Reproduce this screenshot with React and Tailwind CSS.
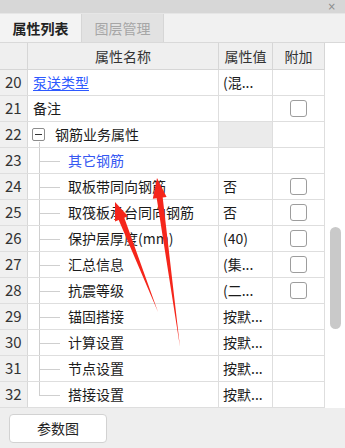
import React from 'react';

const rows = [
    { n: 20, name: '泵送类型', value: '(混...', blue: true, link: true },
    { n: 21, name: '备注', value: '', check: true },
    { n: 22, name: '钢筋业务属性', value: '', group: true },
    { n: 23, name: '其它钢筋', value: '', blue: true, tree: 'mid' },
    { n: 24, name: '取板带同向钢筋', value: '否', check: true, tree: 'mid' },
    { n: 25, name: '取筏板承台同向钢筋', value: '否', check: true, tree: 'mid' },
    { n: 26, name: '保护层厚度(mm)', value: '(40)', check: true, tree: 'mid' },
    { n: 27, name: '汇总信息', value: '(集...', check: true, tree: 'mid' },
    { n: 28, name: '抗震等级', value: '(二...', check: true, tree: 'mid' },
    { n: 29, name: '锚固搭接', value: '按默...', tree: 'mid' },
    { n: 30, name: '计算设置', value: '按默...', tree: 'mid' },
    { n: 31, name: '节点设置', value: '按默...', tree: 'mid' },
    { n: 32, name: '搭接设置', value: '按默...', tree: 'end' },
];

const font = { fontFamily: '"Noto Sans CJK SC", "Liberation Sans", sans-serif' };

const App = () => {
    return (
        <div className="relative w-[345px] h-[448px] bg-[#eeeeee] overflow-hidden text-[14px] text-[#1b1b1b]" style={font}>
            {/* title bar */}
            <div className="h-[14px] bg-[#d7d7d7] flex items-center justify-end pr-[9px] border-b border-[#e6e6e6]">
                <span className="text-[10px] leading-[10px] text-[#8a8a8a]" style={{ fontFamily: '"DejaVu Sans", sans-serif' }}>×</span>
            </div>

            {/* tabs */}
            <div className="h-[29px] flex bg-[#f1f1f1] border-b border-[#d9d9d9]">
                <div className="w-[82px] flex items-center justify-center bg-[#f3f3f3] border-r border-[#d6d6d6] font-bold text-[#222]">属性列表</div>
                <div className="w-[82px] flex items-center justify-center bg-[#e2e2e2] border-r border-[#d6d6d6] text-[#a6a6a6]">图层管理</div>
            </div>

            {/* table */}
            <div className="flex bg-white">
                <div className="w-[325px]">
                    <div className="grid grid-cols-[28px_191px_54px_52px] h-[27px] bg-[#efefef] border-b border-[#d6d6d6]">
                        <div className="border-r border-[#d6d6d6]"></div>
                        <div className="border-r border-[#d6d6d6] flex items-center justify-center text-[#333]">属性名称</div>
                        <div className="border-r border-[#d6d6d6] flex items-center justify-center text-[#333]">属性值</div>
                        <div className="border-r border-[#d6d6d6] flex items-center justify-center text-[#333]">附加</div>
                    </div>
                    {rows.map((r) => (
                        <div key={r.n} className="grid grid-cols-[28px_191px_54px_52px] h-[26px] border-b border-[#dedede]">
                            <div className="bg-[#f0f0f0] border-r border-[#d8d8d8] flex items-center pl-[5px] text-[#333] text-[15px]">{r.n}</div>
                            <div className="relative border-r border-[#dedede] flex items-center overflow-hidden whitespace-nowrap">
                                {r.group && (
                                    <>
                                        <span className="ml-[4px] w-[13px] h-[13px] border border-[#8c8c8c] rounded-[2px] flex items-center justify-center bg-white">
                                            <span className="w-[7px] h-[1px] bg-[#333]"></span>
                                        </span>
                                        <span className="absolute left-[11px] top-[20px] bottom-[-1px] w-px bg-[#cfcfcf]"></span>
                                        <span className="ml-[10px]">{r.name}</span>
                                    </>
                                )}
                                {r.tree && (
                                    <>
                                        <span className={`absolute left-[11px] top-[-1px] w-px bg-[#cfcfcf] ${r.tree === 'end' ? 'h-[14px]' : 'bottom-[-1px]'}`}></span>
                                        <span className="absolute left-[11px] top-[13px] w-[21px] h-px bg-[#cfcfcf]"></span>
                                        <span className={`ml-[40px] ${r.blue ? 'text-[#3658f2]' : ''}`}>{r.name}</span>
                                    </>
                                )}
                                {!r.group && !r.tree && (
                                    <span className={`ml-[5px] ${r.blue ? 'text-[#2d59ff]' : ''} ${r.link ? 'underline underline-offset-2' : ''}`}>{r.name}</span>
                                )}
                            </div>
                            <div className={`border-r border-[#dedede] flex items-center pl-[4px] whitespace-nowrap overflow-hidden ${r.group ? 'bg-[#ebebeb]' : ''}`}>{r.value}</div>
                            <div className="border-r border-[#dedede] flex items-center justify-center">
                                {r.check && <span className="w-[17px] h-[17px] border border-[#9d9d9d] rounded-[3px] bg-white"></span>}
                            </div>
                        </div>
                    ))}
                </div>
                {/* scrollbar */}
                <div className="w-[20px] bg-white flex flex-col pt-[184px] pl-[5px]">
                    <div className="w-[11px] h-[102px] rounded-full bg-[#c9c9c9]"></div>
                </div>
            </div>

            {/* bottom */}
            <div className="pl-[9px] pt-[6px]">
                <button className="w-[98px] h-[29px] bg-white border border-[#d2d2d2] rounded-[4px] text-[14px] text-[#222]" style={font}>参数图</button>
            </div>

            {/* annotation arrows */}
            <svg className="absolute left-0 top-0 pointer-events-none" width="345" height="448">
                <polygon points="115,202 128,216.3 124.3,217.7 158,312 118.7,219.9 115,221.4" fill="#f5261b" />
                <polygon points="157,178 166.6,196.9 162.7,197.4 180,347 156.7,198.2 152.8,198.7" fill="#f5261b" />
            </svg>
        </div>
    );
};

export default App;
